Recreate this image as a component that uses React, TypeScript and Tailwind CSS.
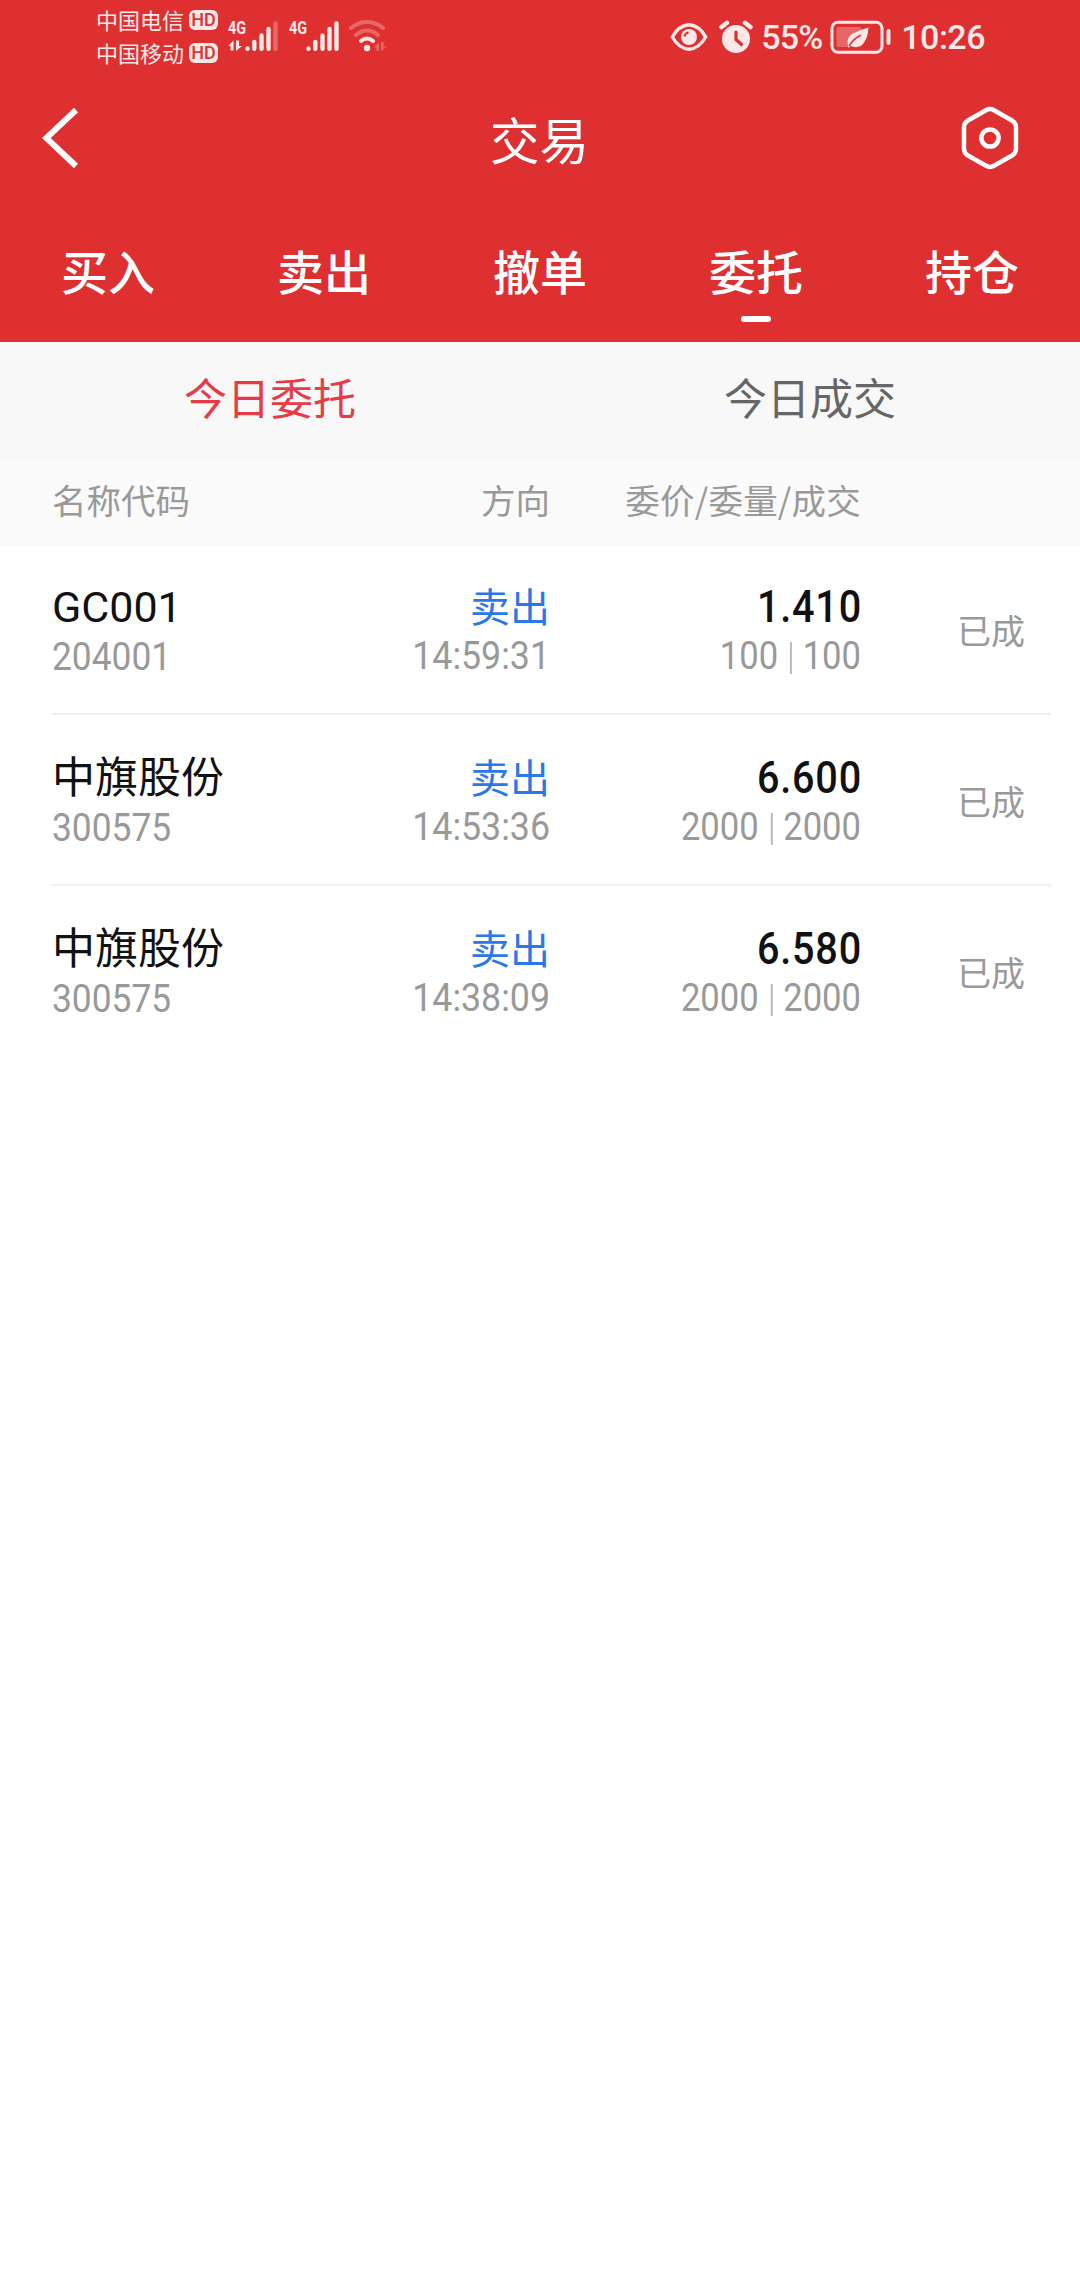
import React from 'react';

const TABS = ['买入', '卖出', '撤单', '委托', '持仓'];

const ORDERS = [
  { name: 'GC001', code: '204001', side: '卖出', time: '14:59:31', price: '1.410', amount: '100', filled: '100', status: '已成' },
  { name: '中旗股份', code: '300575', side: '卖出', time: '14:53:36', price: '6.600', amount: '2000', filled: '2000', status: '已成' },
  { name: '中旗股份', code: '300575', side: '卖出', time: '14:38:09', price: '6.580', amount: '2000', filled: '2000', status: '已成' },
];

const Carrier: React.FC<{ name: string }> = ({ name }) => (
  <div className="flex h-[33px] items-center">
    <span className="w-[88px] text-[22px] leading-[33px] whitespace-nowrap">{name}</span>
    <span className="ml-[5px] flex h-[20px] w-[29px] items-center justify-center rounded-[6px] bg-[#fde7e7] font-[Roboto] text-[18px] leading-none font-medium text-[#de3031]">
      HD
    </span>
  </div>
);

const Signal: React.FC<{ weak?: boolean }> = ({ weak }) => (
  <div className="relative h-[34px] w-[52px]">
    <span className="absolute top-[-2px] left-0 origin-left scale-x-[0.76] font-[Roboto] text-[19px] leading-[20px] font-bold">4G</span>
    <svg className="absolute top-0 left-0" width="52" height="34" viewBox="0 0 52 34" fill="none" stroke="#fde7e7" strokeWidth="4.4" strokeLinecap="round">
      {weak && (
        <g fill="#fde7e7" stroke="none">
          <path d="M0 26 5.5 20.5V30.5H2.5V26Z" />
          <path d="M8 20.5V31L14 26H11V20.5Z" />
        </g>
      )}
      <path d="M19.5 28.5v.3M26.3 22v6.8M33.5 15.500v13.300M40.500 9v19.800" />
      <path d="M47.500 3.500v25.300" opacity={weak ? 0.3 : 1} />
    </svg>
  </div>
);

const StatusBar: React.FC = () => (
  <div className="flex h-[72px] items-start text-[#fde7e7]">
    <div className="ml-[96px] pt-[3px]">
      <Carrier name="中国电信" />
      <Carrier name="中国移动" />
    </div>
    <div className="mt-[20px] ml-[10px] flex">
      <Signal weak />
      <div className="ml-[9px]">
        <Signal />
      </div>
    </div>
    <svg className="mt-[20px] ml-[7px]" width="40" height="34" viewBox="0 0 40 34" fill="none" stroke="#fde7e7" strokeWidth="4" strokeLinecap="round">
      <path d="M3 8Q19 -4 35 8M8 15Q19 6 30 15" opacity="0.3" />
      <path d="M13 21Q19 16 25 21" />
      <circle cx="19" cy="28" r="3.200" fill="#fde7e7" stroke="none" />
      <path d="M26 27.500 31 22V31H28.500V27.500ZM33 22V31L39 26.500H35.500V22Z" fill="#fde7e7" stroke="none" opacity="0.3" />
    </svg>

    <div className="mt-[18px] mr-[95px] ml-auto flex h-[38px] items-center">
      <svg width="38" height="30" viewBox="0 0 38 30" fill="none" stroke="#fde7e7" strokeWidth="3.400">
        <path d="M2.300 15Q9 3.300 19 2.800Q29 3.300 35.700 15Q29 26.700 19 27.200Q9 26.700 2.300 15Z" />
        <circle cx="19" cy="15" r="8" fill="#fde7e7" stroke="none" />
        <path d="M14.500 14.500Q15 11 18.500 10.500" stroke="#de3031" strokeWidth="2" />
      </svg>
      <svg className="ml-[11px]" width="34" height="34" viewBox="0 0 34 34" fill="none">
        <circle cx="17" cy="19" r="14" fill="#fde7e7" />
        <path d="M2.500 7 8 2.800M31.500 7 26 2.800" stroke="#fde7e7" strokeWidth="4.500" strokeLinecap="round" />
        <path d="M17 12v7.500l5.500 5" stroke="#de3031" strokeWidth="3.200" strokeLinecap="round" />
      </svg>
      <span className="ml-[8px] w-[63px] font-[Roboto] text-[34px] leading-[38px] font-medium tracking-[-0.8px]">55%</span>
      <svg className="ml-[6px]" width="61" height="34" viewBox="0 0 61 34" fill="none">
        <rect x="2" y="2.200" width="50" height="30" rx="6" stroke="#fde7e7" strokeWidth="3" />
        <rect x="6.500" y="7" width="25" height="20" rx="2" fill="#fde7e7" opacity="0.3" />
        <path d="M18 26Q16 18 22 14Q29 10 38.500 7.500Q38 19 32 25Q26 29 20.500 25.500L18 28Z" fill="#fde7e7" />
        <path d="M19 26Q23 19 31 15" stroke="#de3031" strokeWidth="1.500" />
        <path d="M58.500 11v12" stroke="#fde7e7" strokeWidth="4" strokeLinecap="round" />
      </svg>
      <span className="ml-[10px] font-[Roboto] text-[34px] leading-[38px] font-medium tracking-[-0.5px]">10:26</span>
    </div>
  </div>
);

const App: React.FC = () => {
  return (
    <main className="flex h-[2280px] w-[1080px] flex-col bg-white font-['Noto_Sans_CJK_SC',sans-serif] font-normal">
      <header className="flex h-[342px] flex-col bg-[#de3031] text-white">
        <StatusBar />

        {/* Title bar */}
        <div className="grid h-[132px] grid-cols-[1fr_auto_1fr] items-center">
          <svg className="ml-[42px]" width="60" height="60" viewBox="0 0 60 60" fill="none" stroke="white" strokeWidth="6">
            <path d="M34 2 4.300 30 34 58" />
          </svg>
          <h1 className="mr-px pt-px text-[49.5px] leading-[72px]">交易</h1>
          <svg className="mr-[60px] justify-self-end" width="60" height="64" viewBox="0 0 60 64" fill="none" stroke="white" strokeWidth="4.500">
            <path d="M26 4.200Q30 2 34 4.200L52 14.500Q56 17 56 21V43Q56 47 52 49.500L34 59.800Q30 62 26 59.800L8 49.500Q4 47 4 43V21Q4 17 8 14.500Z" />
            <circle cx="30" cy="32" r="8.600" />
          </svg>
        </div>

        {/* Trade tabs */}
        <nav className="grid flex-1 grid-cols-5">
          {TABS.map((tab) => (
            <div key={tab} className="flex flex-col items-center pt-[32px]">
              <span className="text-[47px] leading-[68px] font-medium">{tab}</span>
              {tab === '委托' && <span className="mt-[12px] h-[6px] w-[30px] rounded-[3px] bg-white" />}
            </div>
          ))}
        </nav>
      </header>

      <div className="grid h-[118px] grid-cols-2 bg-[#f8f8f8] text-center text-[43px] leading-[108px]">
        <span className="text-[#e63c47]">今日委托</span>
        <span className="text-[#666666]">今日成交</span>
      </div>

      <div className="flex h-[86px] bg-[#fafafa] pl-[52px] text-[34.5px] leading-[78px] text-[#999999]">
        <span className="w-[248px]">名称代码</span>
        <span className="w-[250px] text-right">方向</span>
        <span className="w-[311px] text-right tracking-[0.2px]">委价/委量/成交</span>
      </div>

      {/* Order list */}
      <ul className="pl-[52px]">
        {ORDERS.map((order, index) => (
          <li
            key={index}
            className="mr-[29px] flex h-[171px] border-b-2 border-[#eeeeee] pt-[33px] text-[#999999] first:h-[169px] first:pt-[31px] last:border-b-0"
          >
            <div className="w-[248px]">
              <p className="font-[Roboto,'Noto_Sans_CJK_SC',sans-serif] text-[43px] leading-[60px] text-[#111111]">{order.name}</p>
              <p className="origin-left scale-x-[0.93] pt-px font-[Roboto] text-[38px] leading-[38px] font-[450]">{order.code}</p>
            </div>
            <div className="w-[250px] text-right">
              <p className="-mt-[2px] mb-[2px] text-[40px] leading-[60px] text-[#2b78e8]">{order.side}</p>
              <p className="origin-right scale-x-[0.94] font-[Roboto] text-[38px] leading-[38px] font-[450]">{order.time}</p>
            </div>
            <div className="w-[311px] text-right font-[Roboto]">
              <p className="-mr-px origin-right scale-x-[0.9] text-[44px] leading-[60px] font-medium tracking-[0.9px] text-[#111111]">{order.price}</p>
              <p className="flex origin-right scale-x-[0.91] items-center justify-end text-[38px] leading-[38px] font-[450]">
                <span>{order.amount}</span>
                <span className="mr-[12px] ml-[13px] mt-1 h-[32px] w-[2px] bg-[#b5b5b5]" />
                <span>{order.filled}</span>
              </p>
            </div>
            <p className="flex-1 text-right text-[34px] leading-[105px]">
              <span className="mr-[26px]">{order.status}</span>
            </p>
          </li>
        ))}
      </ul>
    </main>
  );
};

export default App;
